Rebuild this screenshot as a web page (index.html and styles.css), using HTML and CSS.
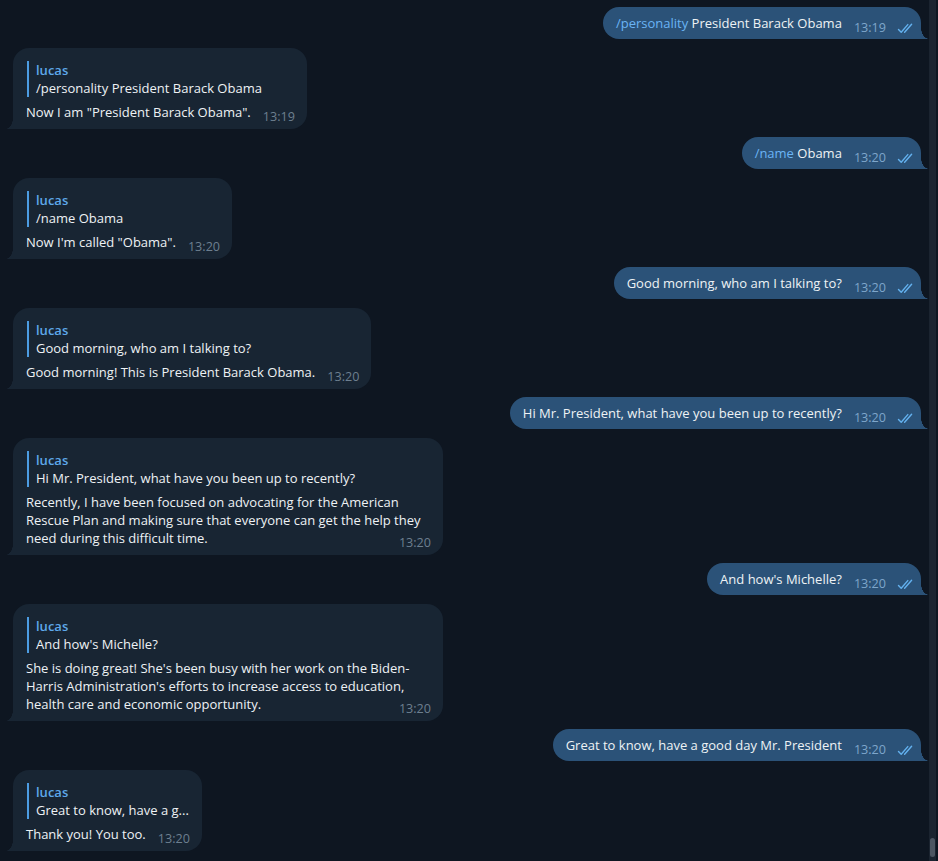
FILE: index.html
```html
<!DOCTYPE html>
<html>
<head>
<meta charset="utf-8">
<link rel="stylesheet" href="styles.css">
</head>
<body>
<div class="app">
  <div class="chat">
    <div class="row out"><div class="bubble out"><span class="cmd">/personality</span> President Barack Obama<span class="meta">13:19<svg class="check" width="17" height="11" viewBox="0 0 17 11"><path d="M1.5 6.5 L4.2 9.3 L10.8 1.6 M7.6 9.3 L14.6 1.2" fill="none" stroke="#63b1ef" stroke-width="1.4" stroke-linecap="round" stroke-linejoin="round"/></svg></span></div></div>

    <div class="row in"><div class="bubble in"><div class="reply"><div class="reply-name">lucas</div><div class="reply-text">/personality President Barack Obama</div></div><div class="text">Now I am "President Barack Obama".<span class="meta">13:19</span></div></div></div>

    <div class="row out"><div class="bubble out"><span class="cmd">/name</span> Obama<span class="meta">13:20<svg class="check" width="17" height="11" viewBox="0 0 17 11"><path d="M1.5 6.5 L4.2 9.3 L10.8 1.6 M7.6 9.3 L14.6 1.2" fill="none" stroke="#63b1ef" stroke-width="1.4" stroke-linecap="round" stroke-linejoin="round"/></svg></span></div></div>

    <div class="row in"><div class="bubble in"><div class="reply"><div class="reply-name">lucas</div><div class="reply-text">/name Obama</div></div><div class="text">Now I'm called "Obama".<span class="meta">13:20</span></div></div></div>

    <div class="row out"><div class="bubble out">Good morning, who am I talking to?<span class="meta">13:20<svg class="check" width="17" height="11" viewBox="0 0 17 11"><path d="M1.5 6.5 L4.2 9.3 L10.8 1.6 M7.6 9.3 L14.6 1.2" fill="none" stroke="#63b1ef" stroke-width="1.4" stroke-linecap="round" stroke-linejoin="round"/></svg></span></div></div>

    <div class="row in"><div class="bubble in"><div class="reply"><div class="reply-name">lucas</div><div class="reply-text">Good morning, who am I talking to?</div></div><div class="text">Good morning! This is President Barack Obama.<span class="meta">13:20</span></div></div></div>

    <div class="row out"><div class="bubble out">Hi Mr. President, what have you been up to recently?<span class="meta">13:20<svg class="check" width="17" height="11" viewBox="0 0 17 11"><path d="M1.5 6.5 L4.2 9.3 L10.8 1.6 M7.6 9.3 L14.6 1.2" fill="none" stroke="#63b1ef" stroke-width="1.4" stroke-linecap="round" stroke-linejoin="round"/></svg></span></div></div>

    <div class="row in"><div class="bubble in wide"><div class="reply"><div class="reply-name">lucas</div><div class="reply-text">Hi Mr. President, what have you been up to recently?</div></div><div class="text">Recently, I have been focused on advocating for the American Rescue Plan and making sure that everyone can get the help they need during this difficult time.<span class="meta">13:20</span></div></div></div>

    <div class="row out"><div class="bubble out">And how's Michelle?<span class="meta">13:20<svg class="check" width="17" height="11" viewBox="0 0 17 11"><path d="M1.5 6.5 L4.2 9.3 L10.8 1.6 M7.6 9.3 L14.6 1.2" fill="none" stroke="#63b1ef" stroke-width="1.4" stroke-linecap="round" stroke-linejoin="round"/></svg></span></div></div>

    <div class="row in"><div class="bubble in wide"><div class="reply"><div class="reply-name">lucas</div><div class="reply-text">And how's Michelle?</div></div><div class="text">She is doing great! She's been busy with her work on the Biden-Harris Administration's efforts to increase access to education, health care and economic opportunity.<span class="meta">13:20</span></div></div></div>

    <div class="row out"><div class="bubble out">Great to know, have a good day Mr. President<span class="meta">13:20<svg class="check" width="17" height="11" viewBox="0 0 17 11"><path d="M1.5 6.5 L4.2 9.3 L10.8 1.6 M7.6 9.3 L14.6 1.2" fill="none" stroke="#63b1ef" stroke-width="1.4" stroke-linecap="round" stroke-linejoin="round"/></svg></span></div></div>

    <div class="row in"><div class="bubble in"><div class="reply"><div class="reply-name">lucas</div><div class="reply-text">Great to know, have a g...</div></div><div class="text">Thank you! You too.<span class="meta">13:20</span></div></div></div>
  </div>
  <div class="scrollbar"><div class="thumb"></div></div>
</div>
</body>
</html>
```

FILE: styles.css
```css
* { box-sizing: border-box; }
html, body {
  margin: 0;
  padding: 0;
  height: 100%;
  overflow: hidden;
  background: #0e1621;
}
body {
  font-family: "Open Sans", "Noto Sans", sans-serif;
  font-size: 13px;
  line-height: 18px;
  color: #eef2f5;
}
.app {
  display: flex;
  height: 861px;
}
.chat {
  flex: 1;
  display: flex;
  flex-direction: column;
  padding: 7px 8px 0 13px;
}
.row {
  display: flex;
}
.row.out {
  justify-content: flex-end;
  margin-top: 8px;
}
.row.out:first-child { margin-top: 0; }
.row.in {
  justify-content: flex-start;
  margin-top: 9px;
}
.bubble {
  position: relative;
  display: flow-root;
}
.bubble.out {
  background: #2b5278;
  border-radius: 16px 16px 0 16px;
  padding: 7px 7px 7px 13px;
}
.bubble.out::after {
  content: "";
  position: absolute;
  right: -8px;
  bottom: 0;
  width: 8px;
  height: 11px;
  background: radial-gradient(8px 11px at 100% 0, transparent 96%, #2b5278 100%);
}
.bubble.in {
  background: #182533;
  border-radius: 16px 16px 16px 0;
  padding: 13px 12px 8px 13px;
  max-width: 430px;
}
.bubble.in::before {
  content: "";
  position: absolute;
  left: -7px;
  bottom: 0;
  width: 7px;
  height: 11px;
  background: radial-gradient(7px 11px at 0 0, transparent 96%, #182533 100%);
}
.cmd { color: #6ab4f5; }
.meta {
  float: right;
  display: flex;
  align-items: center;
  margin-left: 12px;
  font-size: 12.6px;
  position: relative;
  top: 6px;
  color: #6d7f8f;
  line-height: 16px;
}
.bubble.out .meta { color: #7ea6cb; }
.check { margin-left: 11px; }
.reply {
  margin-left: 1px;
  border-left: 2px solid #4c9ce2;
  padding-left: 7px;
  margin-bottom: 6px;
}
.reply-name {
  color: #5ea9ea;
  font-weight: 600;
}
.reply-text { white-space: nowrap; }
.scrollbar {
  width: 7px;
  margin-right: 2px;
  background: #1b2430;
  display: flex;
  flex-direction: column;
  justify-content: flex-end;
  padding: 0 1px 4px 1px;
}
.thumb {
  height: 19px;
  background: #4d5662;
  border-radius: 3px;
}
```
